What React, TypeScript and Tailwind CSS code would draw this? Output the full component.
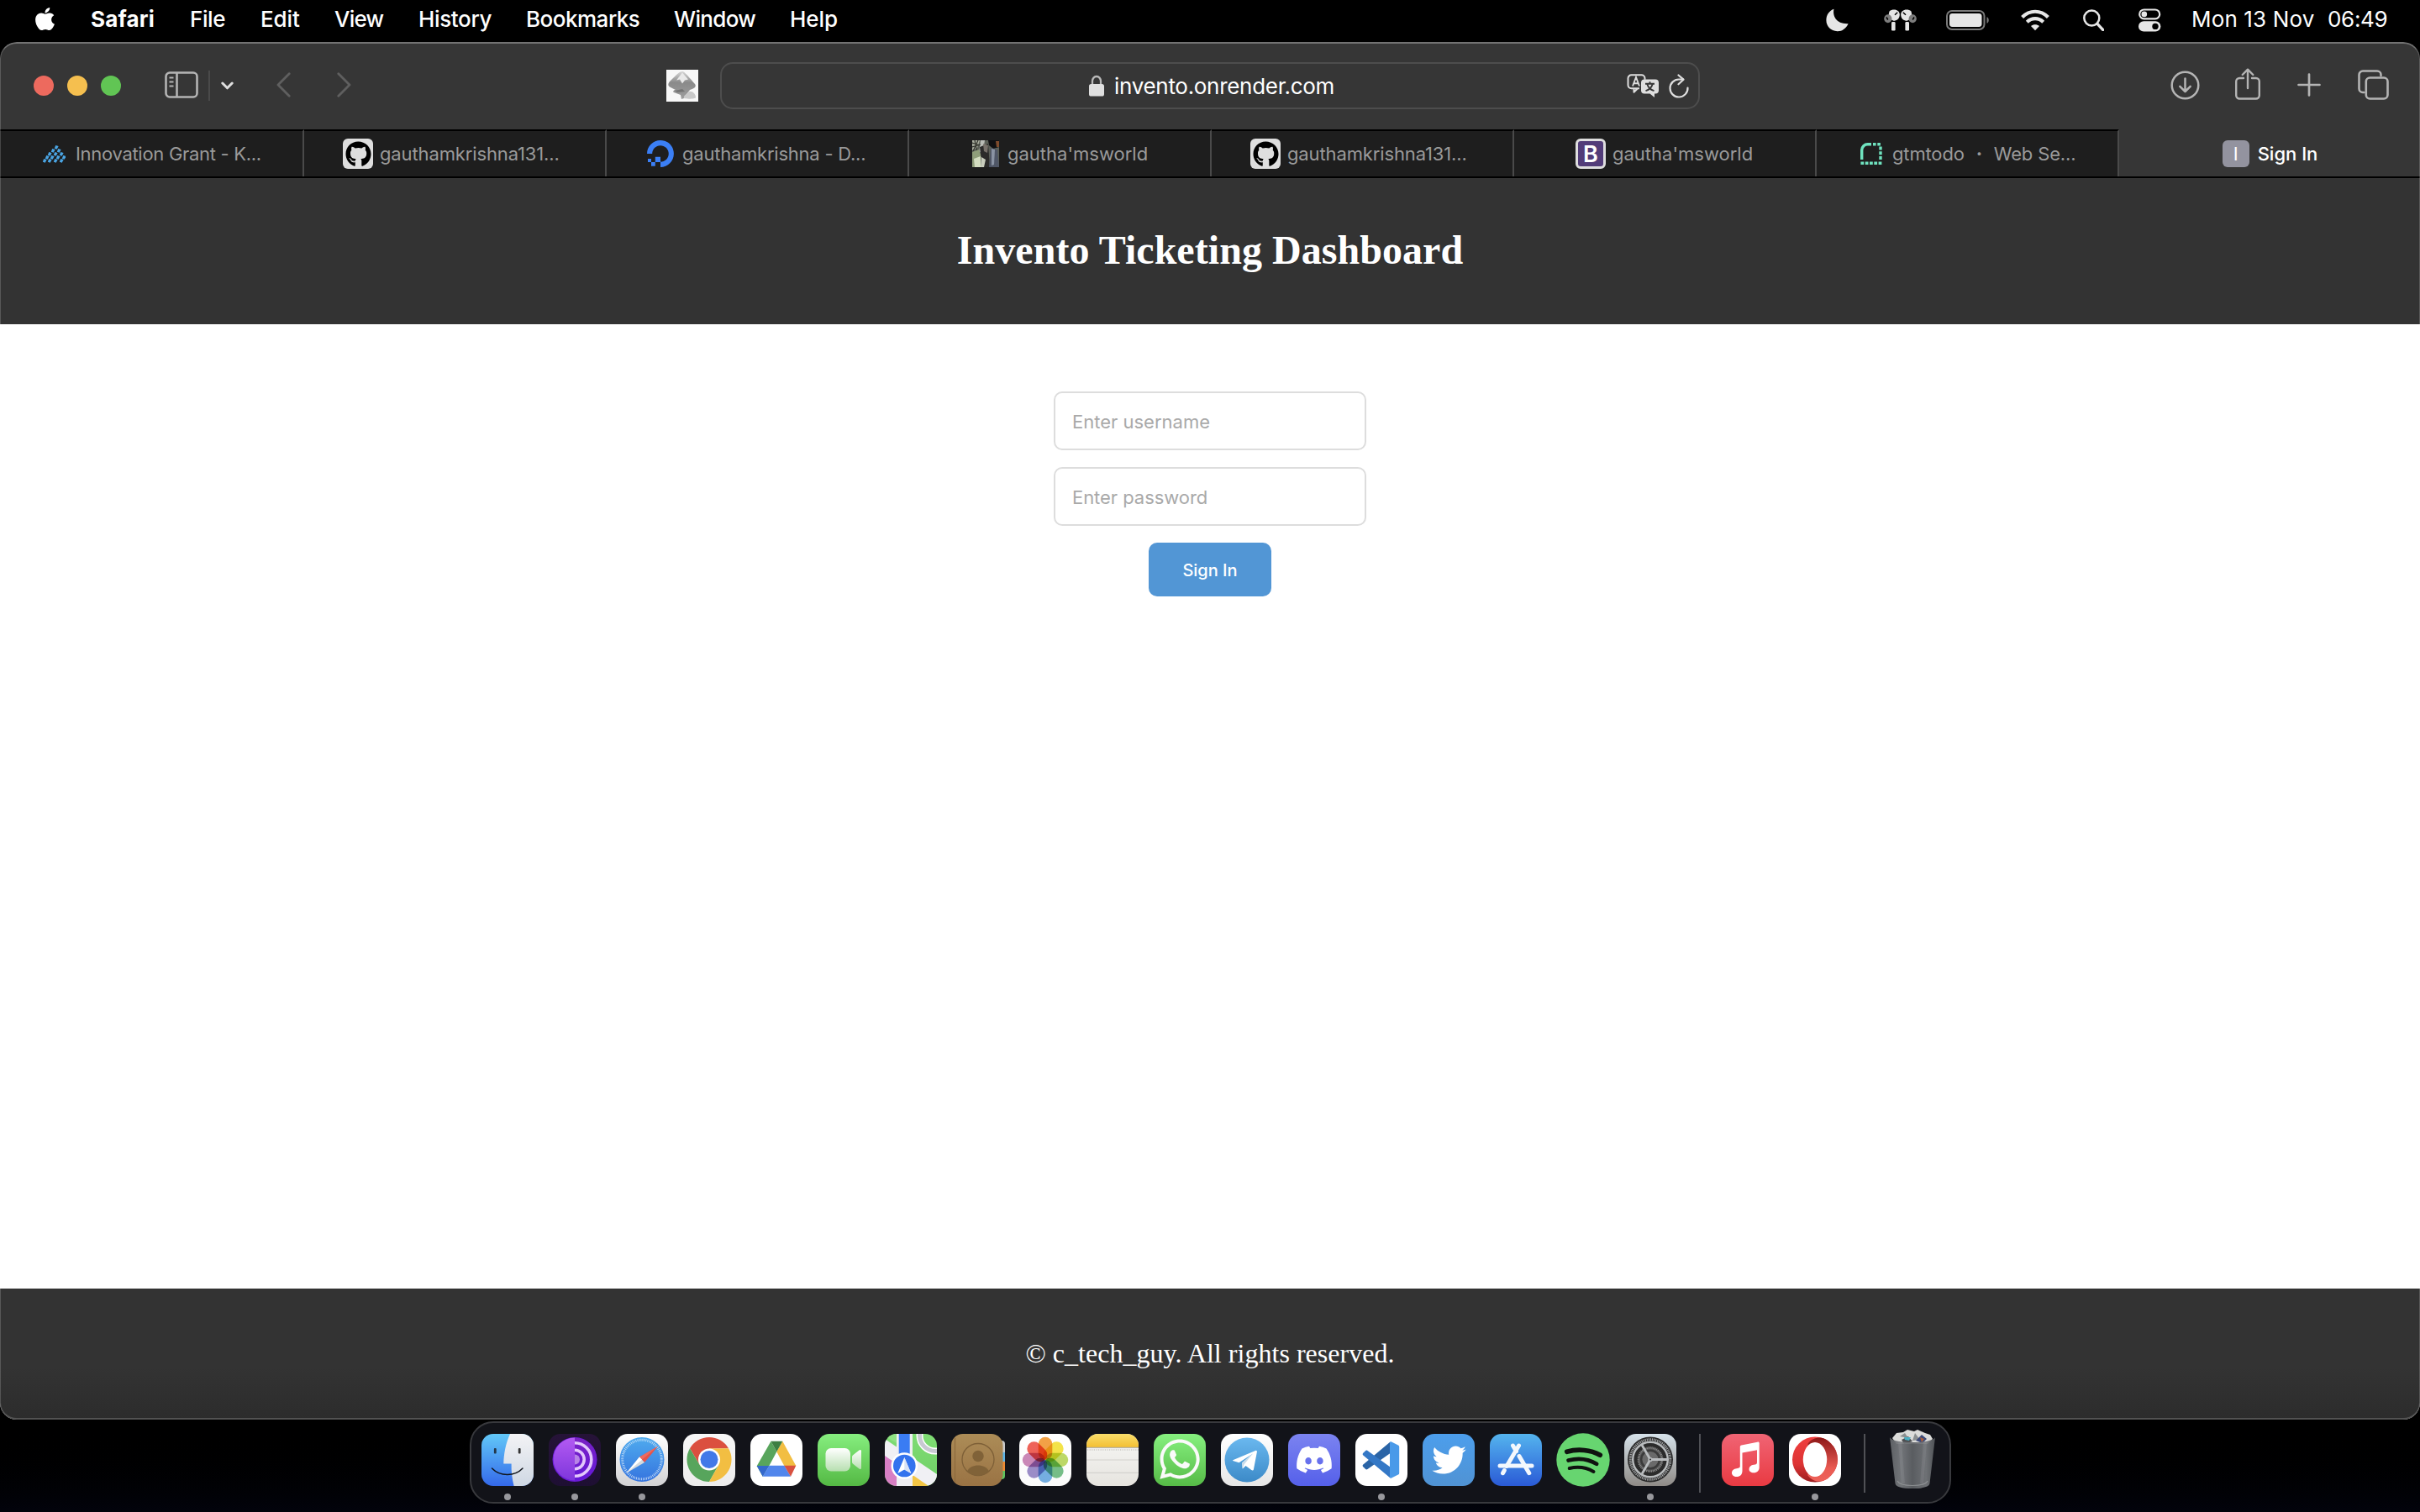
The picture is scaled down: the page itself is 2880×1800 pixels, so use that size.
import React from "react";
import { FaApple, FaDiscord, FaGithub, FaTwitter, FaWhatsapp } from "react-icons/fa";

/* ---------------------------------------------------------------- menu bar */

const menus = [
  { label: "Safari", cls: "w-[118px] font-bold tracking-[0.2px]" },
  { label: "File", cls: "w-[84px] font-medium tracking-[-0.4px]" },
  { label: "Edit", cls: "w-[88px] font-medium tracking-[-0.1px]" },
  { label: "View", cls: "w-[100px] font-medium tracking-[-0.8px]" },
  { label: "History", cls: "w-[128px] font-medium tracking-[-0.35px]" },
  { label: "Bookmarks", cls: "w-[176px] font-medium tracking-[-0.5px]" },
  { label: "Window", cls: "w-[138px] font-medium tracking-[-0.65px]" },
  { label: "Help", cls: "font-medium tracking-[-0.1px]" },
];

function MenuBar() {
  return (
    <header className="flex h-[50px] w-full shrink-0 items-center bg-black text-[26px] leading-none text-white">
      <FaApple className="mb-[5px] ml-[39px] mr-[40px] h-[31px] w-[29px] shrink-0" />
      <nav className="flex grow pb-[5px]">
        {menus.map((m) => (
          <span key={m.label} className={m.cls}>{m.label}</span>
        ))}
      </nav>
      <div className="flex shrink-0 items-center pb-[3px] text-[#e6e6e6]">
        <svg className="mr-[42px] h-[28px] w-[27px]" viewBox="0 0 27 28">
          <path d="M9.5 .8C7.6 9.6 12.8 18.9 26.6 18.2 24 24 19 27.4 13.6 27.2 5.800 27 .4 21.200 .4 14 .4 8 4 2.600 9.500 .8Z" fill="currentColor" />
        </svg>
        <svg className="mr-[35px] h-[26px] w-[39px]" viewBox="0 0 39 26">
          <g fill="currentColor">
            <path d="M12 .6c4 0 7 2.500 6.800 6.200-.2 4.600-3.400 7-7.300 7L8 12 5.600 6.500 6.500 2.600C8 1.200 10 .6 12 .6Z" />
            <path d="M27 .6c-4 0-7 2.500-6.800 6.200.2 4.600 3.400 7 7.300 7L31 12l2.400-5.500-.9-3.900C31 1.200 29 .6 27 .6Z" />
            <rect x="9" y="15" width="4.600" height="10.600" rx="1.300" />
            <rect x="25.400" y="15" width="4.600" height="10.600" rx="1.300" />
          </g>
          <g fill="#7d7d7d">
            <ellipse cx="4.800" cy="11.200" rx="4.600" ry="5" />
            <ellipse cx="34.200" cy="11.200" rx="4.600" ry="5" />
          </g>
          <path d="M13 6.800l3.200-3M26 6.800l-3.200-3M3 9.500l1.800 3M36 9.500l-1.800 3" stroke="#000" strokeWidth="1.500" />
        </svg>
        <svg className="mr-[37px] h-[24px] w-[52px]" viewBox="0 0 52 24">
          <rect x="1" y="1" width="44.500" height="22" rx="6" fill="none" stroke="#7a7a7a" strokeWidth="2" />
          <rect x="4" y="4" width="38.500" height="16" rx="3.400" fill="currentColor" />
          <path d="M48.500 8.200c3 1.200 3 6.400 0 7.600Z" fill="#7a7a7a" />
        </svg>
        <svg className="mr-[40px] h-[26px] w-[34px]" viewBox="0 0 34 26">
          <g fill="none" stroke="currentColor" strokeWidth="4.200">
            <path d="M1.600 9.400C10.500 .5 23.500 .5 32.400 9.400" />
            <path d="M7.300 15.200c5.600-5.400 13.800-5.400 19.400 0" />
          </g>
          <path d="M17 25.300l-5-5.200c2.800-2.600 7.200-2.600 10 0Z" fill="currentColor" />
        </svg>
        <svg className="mr-[41px] h-[26px] w-[25px]" viewBox="0 0 25 26">
          <circle cx="10.300" cy="10.500" r="9" fill="none" stroke="currentColor" strokeWidth="2.500" />
          <path d="M17 17.400l6.600 7" stroke="currentColor" strokeWidth="3.400" strokeLinecap="round" />
        </svg>
        <svg className="mr-[36px] h-[28px] w-[27px]" viewBox="0 0 27 28">
          <rect x="1.200" y="1.500" width="24" height="10.800" rx="5.400" fill="none" stroke="currentColor" strokeWidth="2.200" />
          <circle cx="6.800" cy="6.900" r="3.300" fill="currentColor" />
          <rect y="15.200" width="26.400" height="12.400" rx="6.200" fill="currentColor" />
          <circle cx="20" cy="21.400" r="3.700" fill="#000" />
        </svg>
      </div>
      <span className="w-[162px] shrink-0 pb-[5px] font-normal tracking-[0.15px]">Mon 13 Nov</span>
      <span className="w-[110px] shrink-0 pb-[5px] font-normal tracking-[-0.3px]">06:49</span>
    </header>
  );
}

/* ----------------------------------------------------------------- toolbar */

function Toolbar() {
  return (
    <div className="flex h-[104px] shrink-0 items-center bg-[#363636]">
      <div className="ml-[40px] flex gap-4">
        <i className="size-6 rounded-full bg-[#ed6a5e]" />
        <i className="size-6 rounded-full bg-[#f5bf4f]" />
        <i className="size-6 rounded-full bg-[#61c554]" />
      </div>
      <svg className="mb-[2px] ml-[52px] h-[32px] w-[40px] text-[#b4b4b4]" viewBox="0 0 40 32" fill="none" stroke="currentColor" strokeWidth="2.600">
        <rect x="1.500" y="1.500" width="37" height="29" rx="4.500" />
        <path d="M14.500 1.500v29" />
        <path d="M5.500 7.500h5M5.500 12.500h5M5.500 17.500h5" strokeWidth="2" />
      </svg>
      <i className="ml-[12px] h-[36px] w-[2px] bg-[#4a4a4a]" />
      <svg className="ml-[13px] h-[10px] w-[15px]" viewBox="0 0 15 10" fill="none" stroke="#dedede" strokeWidth="3" strokeLinecap="round" strokeLinejoin="round">
        <path d="M1.800 2l5.700 5.800L13.200 2" />
      </svg>
      <svg className="mb-[2px] ml-[51px] h-[30px] w-[17px]" viewBox="0 0 17 30" fill="none" stroke="#5f5f5f" strokeWidth="2.800" strokeLinecap="round" strokeLinejoin="round">
        <path d="M15.200 1.800L2 15l13.200 13.200" />
      </svg>
      <svg className="mb-[2px] ml-[55px] h-[30px] w-[17px]" viewBox="0 0 17 30" fill="none" stroke="#5f5f5f" strokeWidth="2.800" strokeLinecap="round" strokeLinejoin="round">
        <path d="M1.800 1.800L15 15 1.800 28.200" />
      </svg>
      <svg className="ml-[375px] h-[38px] w-[38px]" viewBox="0 0 38 38">
        <defs>
          <linearGradient id="ink" x1="0" y1="0" x2="0" y2="1">
            <stop offset="0" stopColor="#d8d8d8" /><stop offset=".4" stopColor="#8a8a8a" /><stop offset="1" stopColor="#9d9d9d" />
          </linearGradient>
        </defs>
        <rect width="38" height="38" fill="#f8f8f8" />
        <path d="M19 2c2 0 4 2 15 15 2 3 0 5-6 7l-3 4c-2 2-1 4-4 6l-3 1-1-5-8-3c-2-1 0-3 2-3l-6-3c-4-2-3-5 0-8C13 5 16 2 19 2Z" fill="url(#ink)" />
        <path d="M19 3.500l7 8-4 1-3 4-3-5-4 1Z" fill="#e9e9e9" />
        <path d="M10 25l9-2 3 3-9 1Z" fill="#666" opacity=".7" />
        <path d="M21 34c-1-4 4-5 6-8 4-1 8 3 8 7 0 2-12 2-14 1Z" fill="#c9c9c9" />
      </svg>
      <div className="ml-[26px] flex h-[56px] w-[1166px] shrink-0 items-center rounded-[15px] border-2 border-[#4d4d4d]">
        <svg className="ml-[437px] h-[26px] w-[18px]" viewBox="0 0 18 26">
          <path d="M4 13V7.500a5 5.500 0 0 1 10 0V13" fill="none" stroke="#b9b9b9" strokeWidth="2.300" />
          <rect y="11" width="18" height="14.600" rx="2.600" fill="#dfdfdf" />
        </svg>
        <span className="ml-[12px] pt-[2px] text-[26px] leading-none tracking-[-0.3px] text-white">invento.onrender.com</span>
        <svg className="ml-auto h-[29px] w-[39px]" viewBox="0 0 39 29">
          <path d="M8.500 17.300v4.500l4.500-4.500M15 17.300H5.500a4 4 0 0 1-4-4V5.300a4 4 0 0 1 4-4h12a4 4 0 0 1 4 4v1.500" fill="none" stroke="#dedede" strokeWidth="2" strokeLinejoin="round" />
          <path d="M7 14.500L11 4l4 10.500M8.300 11.200h5.400" fill="none" stroke="#dedede" strokeWidth="1.900" />
          <path d="M21 6.500h13a4 4 0 0 1 4 4v9a4 4 0 0 1-4 4h-1V28l-5.500-4.500H21a4 4 0 0 1-4-4v-9a4 4 0 0 1 4-4Z" fill="#dedede" />
          <path d="M22 11.800h11M27.500 9.300v2.500M24.300 12c1 4 3.500 6.700 8.200 8.200M30.700 12c-1 4-3.500 6.700-8.200 8.200" fill="none" stroke="#363636" strokeWidth="1.900" />
        </svg>
        <svg className="ml-[11px] mr-[11px] h-[29px] w-[24px]" viewBox="0 0 24 29" fill="none" stroke="#dedede" strokeWidth="2.200" strokeLinecap="round" strokeLinejoin="round">
          <path d="M22.500 16.500A10.500 10.500 0 1 1 12 6.500h5" />
          <path d="M11.500 1.500l6 5.200-6 5.600" />
        </svg>
      </div>
      <div className="ml-[560px] flex items-center text-[#b4b4b4]">
        <svg className="mb-[2px] h-[35px] w-[35px]" viewBox="0 0 35 35" fill="none" stroke="currentColor" strokeWidth="2.500" strokeLinecap="round" strokeLinejoin="round">
          <circle cx="17.500" cy="17.500" r="15.800" />
          <path d="M17.500 9.500v15M11.300 18.800l6.200 6.200 6.200-6.200" />
        </svg>
        <svg className="mb-[5px] ml-[42px] h-[38px] w-[30px]" viewBox="0 0 30 38" fill="none" stroke="currentColor" strokeWidth="2.400" strokeLinecap="round" strokeLinejoin="round">
          <path d="M10 12H5.200a4 4 0 0 0-4 4v16.500a4 4 0 0 0 4 4h19.600a4 4 0 0 0 4-4V16a4 4 0 0 0-4-4H20" />
          <path d="M15 24V2M8.700 8L15 1.700 21.300 8" />
        </svg>
        <svg className="mb-[3px] ml-[44px] h-[28px] w-[28px]" viewBox="0 0 28 28" fill="none" stroke="currentColor" strokeWidth="2.700" strokeLinecap="round">
          <path d="M14 1.500v25M1.500 14h25" />
        </svg>
        <svg className="mb-[3px] ml-[44px] h-[36px] w-[37px]" viewBox="0 0 37 36" fill="none" stroke="currentColor" strokeWidth="2.600" strokeLinecap="round" strokeLinejoin="round">
          <path d="M7.500 27H6a4.500 4.500 0 0 1-4.500-4.500V6A4.500 4.500 0 0 1 6 1.500h17A4.500 4.500 0 0 1 27.500 6v1" />
          <rect x="9.800" y="9.500" width="25.700" height="25" rx="4.500" />
        </svg>
      </div>
    </div>
  );
}

/* -------------------------------------------------------------------- tabs */

function GithubTile() {
  return (
    <span className="flex size-9 shrink-0 items-center justify-center rounded-[6px] bg-[#dedede]">
      <FaGithub className="size-[31px] text-black" />
    </span>
  );
}

const KsumIcon = (
  <svg className="h-[21px] w-[27px]" viewBox="0 0 27 21" fill="#4aa5e4">
    {[
      [14, 1], [10, 5], [17, 5], [6, 9], [13, 9], [20, 9], [3, 13], [9, 13], [16, 13], [23, 13], [0, 17], [6, 17], [13, 17], [20, 17],
    ].map(([x, y]) => (
      <path key={`${x}-${y}`} d={`M${x + 1.200} ${y - 1}l3.400 1-1.800 3.800-3-1Z`} />
    ))}
  </svg>
);

const OceanIcon = (
  <svg className="h-[32px] w-[32px]" viewBox="0 0 32 32" fill="#3b7ff5">
    <path d="M16 32v-6.200c6.600 0 11.600-6.500 9.100-13.400a9.300 9.300 0 0 0-5.500-5.500C12.700 4.400 6.200 9.400 6.200 16H0C0 5.600 10.100-2.600 21 .8c4.800 1.500 8.600 5.300 10.100 10.100C34.500 21.900 26.400 32 16 32Z" />
    <path d="M9.800 19.700H16V26H9.800zM5 26h4.800v4.800H5zM1 22h4v4H1z" />
  </svg>
);

const PhotoIcon = (
  <svg className="h-[32px] w-[32px]" viewBox="0 0 32 32">
    <rect width="32" height="32" fill="#5c6058" />
    <path d="M0 0h9l-3 9-6 3Z" fill="#a9ad9f" /><path d="M10 0h5l-2 12-5 3Z" fill="#b9bcb6" />
    <path d="M0 3l9 3M0 8l10-3M3 0l3 14M7 0L1 13" stroke="#34362f" strokeWidth="1.200" />
    <path d="M0 14l8-3 3 9-5 12H0Z" fill="#8f9e7a" /><path d="M2 22l8-3v13H3Z" fill="#d3ddc0" />
    <path d="M9 8l10-4 2 28h-9Z" fill="#2b2b2a" /><path d="M13 4l6 2-1 9-4-2Z" fill="#77716a" />
    <path d="M19 0h13v8l-7 2-5-4Z" fill="#101012" /><path d="M28 1h4v7h-3Z" fill="#7d4a2c" />
    <path d="M22 9l8 2 2 21H20Z" fill="#4f5666" /><path d="M23 10l4 1-1 18-3 1Z" fill="#8a93a3" />
    <path d="M11 20l5 3-2 9h-4Z" fill="#c8cdbd" />
  </svg>
);

const BootstrapIcon = (
  <span className="flex h-9 w-9 shrink-0 items-center justify-center rounded-[6px] border-[3px] border-[#dedede] bg-[#523c79] text-[27px] font-semibold leading-none text-white">B</span>
);

const RenderIcon = (
  <svg className="h-[26px] w-[26px]" viewBox="0 0 26 26" fill="none" stroke="#6fe3bf" strokeWidth="3.400">
    <path d="M1.700 20V8.500a7 7 0 0 1 7-6.800H13" />
    <path d="M15 1.700h10.500" strokeDasharray="3.600 1.700" />
    <path d="M24 4.500V21" strokeDasharray="4 1.800" />
    <path d="M.4 24.300h25.200" strokeDasharray="3.800 1.500" />
  </svg>
);

const SignInIcon = (
  <span className="flex size-8 shrink-0 items-center justify-center rounded-[6px] bg-[#93939f] text-[22px] font-normal leading-none text-white">I</span>
);

type Tab = { icon: React.ReactNode; text: React.ReactNode; cls: string };

const tabs: Tab[] = [
  { icon: KsumIcon, text: "Innovation Grant - K...", cls: "pl-[51px] gap-[12px] tracking-[-0.3px]" },
  { icon: <GithubTile />, text: "gauthamkrishna131...", cls: "pl-[46px] gap-[8px] tracking-[-0.13px]" },
  { icon: OceanIcon, text: "gauthamkrishna - D...", cls: "pl-[48px] gap-[10px] tracking-[-0.23px]" },
  { icon: PhotoIcon, text: "gautha'msworld", cls: "pl-[75px] gap-[10px] tracking-[0px]" },
  { icon: <GithubTile />, text: "gauthamkrishna131...", cls: "pl-[46px] gap-[8px] tracking-[-0.13px]" },
  { icon: BootstrapIcon, text: "gautha'msworld", cls: "pl-[73px] gap-[8px] tracking-[0px]" },
  {
    icon: RenderIcon,
    text: (<><span>gtmtodo</span><span className="w-[35px] text-center font-bold">·</span><span>Web Se...</span></>),
    cls: "pl-[52px] gap-[12px] tracking-[-0.15px]",
  },
];

function TabBar() {
  return (
    <div className="flex h-[58px] shrink-0 border-b-2 border-black bg-[#363636] text-[22px] leading-none text-[#9a9a9a]">
      {tabs.map((t, i) => (
        <div key={i} className={`flex w-[360px] shrink-0 items-center border-r-2 border-t-2 border-r-[#4a4a4a] border-t-black bg-[#1e1e1e] first:w-[362px] ${t.cls}`}>
          {t.icon}
          <span className="flex whitespace-pre">{t.text}</span>
        </div>
      ))}
      <div className="flex grow items-center justify-center gap-[10px] pl-px pt-[2px] font-medium text-white">
        {SignInIcon}
        <span>Sign In</span>
      </div>
    </div>
  );
}

/* -------------------------------------------------------------------- page */

function Page() {
  return (
    <div className="flex grow flex-col bg-white">
      <div className="flex h-[174px] shrink-0 items-center justify-center bg-[#333333] pb-[2px]">
        <h1 className="font-['Liberation_Serif',serif] text-[48px] font-bold leading-none tracking-[0.05px] text-white">Invento Ticketing Dashboard</h1>
      </div>
      <form className="flex grow flex-col items-center pt-[80px]">
        <input placeholder="Enter username" className="h-[70px] w-[372px] rounded-[10px] border-2 border-[#dddddd] px-[20px] pt-[2px] text-[22px] placeholder:text-[#a9a9a9]" />
        <input placeholder="Enter password" className="mt-[20px] h-[70px] w-[372px] rounded-[10px] border-2 border-[#dddddd] px-[20px] pt-[2px] text-[22px] tracking-[-0.05px] placeholder:text-[#a9a9a9]" />
        <button type="button" className="mt-[20px] h-[64px] w-[146px] rounded-[10px] bg-[#5296d5] pt-px text-[20px] font-medium leading-none text-white">Sign In</button>
      </form>
      <footer className="flex h-[156px] shrink-0 items-center justify-center bg-linear-to-b from-[#333333] from-60% to-[#2c2c2c] pb-[2px]">
        <p className="font-['Liberation_Serif',serif] text-[32px] leading-none tracking-[0.03px] text-white">© c_tech_guy. All rights reserved.</p>
      </footer>
    </div>
  );
}

/* -------------------------------------------------------------------- dock */

function Tile({ id, from, to, children }: { id: string; from: string; to: string; children?: React.ReactNode }) {
  return (
    <svg className="size-[62px]" viewBox="0 0 62 62">
      <defs>
        <linearGradient id={`${id}-bg`} x1="0" y1="0" x2="0" y2="1">
          <stop offset="0" stopColor={from} /><stop offset="1" stopColor={to} />
        </linearGradient>
        <clipPath id={`${id}-clip`}><rect width="62" height="62" rx="14" /></clipPath>
      </defs>
      <g clipPath={`url(#${id}-clip)`}>
        <rect width="62" height="62" fill={`url(#${id}-bg)`} />
        {children}
      </g>
    </svg>
  );
}

const Finder = (
  <Tile id="finder" from="#62c8f8" to="#3469ea">
    <defs><linearGradient id="finder-r" x1="0" y1="0" x2="0" y2="1"><stop offset="0" stopColor="#f3f3f5" /><stop offset="1" stopColor="#cfd8e4" /></linearGradient></defs>
    <path d="M34 0C29 11 26.500 23 26.300 35.500h9.300c-.2 9 .8 18 3 26.500H62V0Z" fill="url(#finder-r)" />
    <rect x="14.900" y="17" width="2.800" height="6.400" rx="1" fill="#23374a" />
    <rect x="43.800" y="17" width="2.800" height="6.400" rx="1" fill="#333" />
    <path d="M12.500 41c9.500 10 27 10 36.500 0" fill="none" stroke="#10151c" strokeWidth="1.500" strokeLinecap="round" />
  </Tile>
);

const Tor = (
  <Tile id="tor" from="#261338" to="#1e0f33">
    <defs>
      <linearGradient id="tor-l" x1="0" y1="0" x2="0" y2="1"><stop offset="0" stopColor="#b35af2" /><stop offset="1" stopColor="#7e36dc" /></linearGradient>
      <linearGradient id="tor-r" x1="0" y1="0" x2="0" y2="1"><stop offset="0" stopColor="#7a22c4" /><stop offset="1" stopColor="#6417d8" /></linearGradient>
    </defs>
    <circle cx="31" cy="30.500" r="26.500" fill="#6a1bd6" />
    <path d="M31 4.500a25.500 25.500 0 0 0 0 51Z" fill="url(#tor-l)" />
    <path d="M31 4.500a25.500 25.500 0 0 1 0 51Z" fill="url(#tor-r)" />
    <path d="M31 10.700a19.800 19.800 0 0 1 0 39.600M31 19.300a11.200 11.200 0 0 1 0 22.400" fill="none" stroke="#e3c8fb" strokeWidth="3.600" />
    <path d="M31 24.500a6 6 0 0 1 0 12Z" fill="#b884e6" />
  </Tile>
);

const Safari = (
  <Tile id="safari" from="#ffffff" to="#d2d2d4">
    <defs><linearGradient id="safari-c" x1="0" y1="0" x2="0" y2="1"><stop offset="0" stopColor="#4fabee" /><stop offset="1" stopColor="#3574df" /></linearGradient></defs>
    <circle cx="31" cy="30.500" r="26.500" fill="url(#safari-c)" />
    <circle cx="31" cy="30.500" r="23.300" fill="none" stroke="#e8f3fc" strokeOpacity=".85" strokeWidth="3" strokeDasharray=".8 1.230" />
    <path d="M50 14.800L34 34l-6-6.500Z" fill="#e5534a" /><path d="M28 27.500L50 14.800 31 30.700Z" fill="#ee6a60" />
    <path d="M12.300 46.700L28 27.500l6 6.500Z" fill="#d5dade" /><path d="M12.300 46.700L28 27.500l3 3.200Z" fill="#fff" />
  </Tile>
);

const Chrome = (
  <Tile id="chrome" from="#f7f7f7" to="#ececec">
    <path d="M8 17.250A26.500 26.500 0 0 1 54 17.250L31 17.500 19.700 37Z" fill="#db4f3f" />
    <path d="M8 17.250L19.700 37 31 32l11.300 5L31 57A26.500 26.500 0 0 1 8 17.250Z" fill="#57a55c" />
    <path d="M54 17.250A26.500 26.500 0 0 1 31 57L42.300 37 31 17.500Z" fill="#f2be42" />
    <circle cx="31" cy="30.500" r="13" fill="#fff" />
    <circle cx="31" cy="30.500" r="10.500" fill="#4279e8" />
  </Tile>
);

const Drive = (
  <Tile id="drive" from="#ffffff" to="#ffffff">
    <path d="M24.500 8.700L31.300 21.300 22.500 37.800 14.700 50.700 7.700 38.300Z" fill="#58a55c" />
    <path d="M38.300 8.700L54.300 38 40.300 38 31.300 21.300Z" fill="#f2be42" />
    <path d="M24.500 8.700h13.800l-7 12.600Z" fill="#3d7f42" />
    <path d="M7.700 38h14.600l-7.600 12.700Z" fill="#3468cc" />
    <path d="M22.500 37.700h18l7.500 13H14.700Z" fill="#5186ec" />
    <path d="M40.300 37.700h14L48 50.700Z" fill="#d85140" />
  </Tile>
);

const FaceTime = (
  <Tile id="facetime" from="#86ee7f" to="#54b944">
    <defs><linearGradient id="ft" x1="0" y1="0" x2="0" y2="1"><stop offset="0" stopColor="#fff" /><stop offset="1" stopColor="#b7dfb0" /></linearGradient></defs>
    <rect x="9.500" y="17" width="29.500" height="27.500" rx="6.500" fill="url(#ft)" />
    <path d="M41 27.500c0-1 .5-1.800 1.500-2.500l7-5.500c1.300-1 2.500-.5 2.500 1v20c0 1.500-1.200 2-2.500 1l-7-5.500c-1-.7-1.500-1.500-1.500-2.500Z" fill="url(#ft)" />
  </Tile>
);

const Maps = (
  <Tile id="maps" from="#7fdc74" to="#6fcf66">
    <path d="M0 22l15 10v30H0Z" fill="#d77fc4" />
    <path d="M30 44l22 18H30Z" fill="#f3c544" />
    <path d="M0 6l62 42v14H52L0 26Z" fill="#f0f0f4" />
    <path d="M0 0h16v12L0 3Z" fill="#8fe283" />
    <rect x="14" width="19" height="62" fill="#eeeef2" />
    <rect x="16.700" width="13" height="30" fill="#3a7cf3" />
    <circle cx="60" cy="2" r="18.500" fill="none" stroke="#fff" strokeWidth="8" />
    <circle cx="60" cy="2" r="18.500" fill="none" stroke="#c8c9d2" strokeWidth="5" />
    <circle cx="23.300" cy="38" r="15.800" fill="#fff" />
    <circle cx="23.300" cy="38" r="13.300" fill="#3373ee" />
    <path d="M23.300 28l8 19-8-4.500-8 4.500Z" fill="#fff" />
    <path d="M23.300 28l8 19-8-4.500Z" fill="#d8e2f5" />
  </Tile>
);

const Contacts = (
  <svg className="size-[64px]" viewBox="0 0 64 64">
    <defs><linearGradient id="ct" x1="0" y1="0" x2="0" y2="1"><stop offset="0" stopColor="#ac8c57" /><stop offset="1" stopColor="#9a7344" /></linearGradient></defs>
    <g transform="translate(0 1)">
      <path d="M54 8h6a4 4 0 0 1 4 4v10H54Z" fill="#c9c9c9" /><path d="M54 22h10v11H54Z" fill="#5db5e8" />
      <path d="M54 33h10v11H54Z" fill="#ef8b33" /><path d="M54 44h10v6a4 4 0 0 1-4 4h-6Z" fill="#5fc55f" />
      <rect width="61.500" height="62" rx="14" fill="url(#ct)" />
      <path d="M4.500 5v52" stroke="#8c6a3d" strokeWidth="1.200" />
      <circle cx="32" cy="30.500" r="19" fill="none" stroke="#7d5f37" strokeWidth="1.300" />
      <circle cx="32" cy="26.500" r="6.700" fill="#806238" />
      <path d="M19 44.500c4-9.500 22-9.500 26 0a19 19 0 0 1-26 0Z" fill="#806238" />
    </g>
  </svg>
);

const petals = ["#f29b38", "#f3e23b", "#b9d75c", "#6dbb80", "#6caae2", "#9686c6", "#c880b4", "#ee574c"];
const Photos = (
  <Tile id="photos" from="#ffffff" to="#fbfbfb">
    {petals.map((c, i) => (
      <rect key={c} x="22.700" y="3.800" width="16.600" height="27" rx="8.300" fill={c} fillOpacity=".93" className="mix-blend-multiply" transform={`rotate(${i * 45} 31 31)`} />
    ))}
  </Tile>
);

const Notes = (
  <Tile id="notes" from="#f7f7f5" to="#e6e4df">
    <defs><linearGradient id="nt" x1="0" y1="0" x2="0" y2="1"><stop offset="0" stopColor="#fade6b" /><stop offset="1" stopColor="#f3bf33" /></linearGradient></defs>
    <rect width="62" height="16" fill="url(#nt)" />
    <path d="M0 16.300h62" stroke="#a8a59a" strokeWidth="1" />
    <path d="M1 19h61" stroke="#b7b5b0" strokeWidth="1.200" strokeDasharray="1.200 1.400" />
    <path d="M0 31h62M0 46.300h62" stroke="#d3d2ce" strokeWidth="1.200" />
  </Tile>
);

const WhatsApp = (
  <Tile id="wa" from="#86f07f" to="#56bb47">
    <FaWhatsapp x="4" y="3.200" size={54} color="#fafafa" />
  </Tile>
);

const Telegram = (
  <Tile id="tg" from="#ffffff" to="#e6e6e6">
    <defs><linearGradient id="tgc" x1="0" y1="0" x2="0" y2="1"><stop offset="0" stopColor="#6ab8ef" /><stop offset="1" stopColor="#3c8ac8" /></linearGradient></defs>
    <circle cx="31" cy="31" r="26.500" fill="url(#tgc)" />
    <path d="M14.200 31.300L41 19.900c1.300-.5 2.200.2 1.900 1.700L39 41.900c-.3 1.500-1.500 2-2.700 1.200L29.500 38l-3.700 3.500-.8-7L38 23.500 21.500 34.200l-7.300-2.300Z" fill="#fff" />
    <path d="M25 34.500L38 23.500 27.500 36.500l-1.700 5Z" fill="#c9dcea" />
  </Tile>
);

const Discord = (
  <Tile id="dc" from="#7b83f0" to="#5560ea">
    <FaDiscord x="8.300" y="8.000" size={45.400} color="#fff" />
  </Tile>
);

const VSCode = (
  <Tile id="vs" from="#ffffff" to="#ffffff">
    <path d="M41.500 9.500V23L14.500 42c-1 .7-1.800.6-2.600-.2l-2.600-2.600c-.9-.9-.8-2 0-2.700Z" fill="#2a64a6" />
    <path d="M9.300 25.500c-.8-.7-.9-1.800 0-2.700l2.600-2.600c.8-.8 1.600-.9 2.600-.2l27 19.500v13Z" fill="#3478c6" />
    <path d="M41 10c.4-.8 1.200-.9 2-.5l8 3.900c.8.4 1.200 1 1.200 1.900v31.400c0 .9-.4 1.500-1.200 1.900l-8 3.900c-.8.400-1.600.3-2-.5Z" fill="#4a9ae9" />
  </Tile>
);

const Twitter = (
  <Tile id="tw" from="#4c9eec" to="#5093d4">
    <FaTwitter x="11.300" y="10.800" size={40.500} color="#fff" />
  </Tile>
);

const AppStore = (
  <Tile id="as" from="#54b4ee" to="#2a5ad6">
    <g fill="none" stroke="#f4f8fd" strokeWidth="5" strokeLinecap="round">
      <path d="M34.500 14L20 38.500M17.300 43.500l-1.800 3.200M27.500 14l4 6.800M35 26.500l11.800 20.200" />
      <path d="M12 38h38" />
    </g>
  </Tile>
);

const Spotify = (
  <svg className="size-[64px]" viewBox="-1 -1 64 64">
    <circle cx="31" cy="31" r="31.700" fill="#67d570" />
    <g fill="none" stroke="#0f1310" strokeLinecap="round">
      <path d="M11.700 21.300C25 17.300 40 19 51.300 25.200" strokeWidth="5.600" />
      <path d="M13.600 31.500c11.500-3 23.500-1.700 33.500 4.300" strokeWidth="4.800" />
      <path d="M14.700 41c10-2.300 20-1.200 28.800 4" strokeWidth="4" />
    </g>
  </svg>
);

const Settings = (
  <Tile id="st" from="#d6e2ea" to="#8f8b87">
    <circle cx="31" cy="30.500" r="27" fill="#2b2b2b" />
    <circle cx="31" cy="30.500" r="23.800" fill="none" stroke="#a9abad" strokeWidth="3" strokeDasharray="1.100 1" />
    <circle cx="31" cy="30.500" r="20.800" fill="none" stroke="#b9bcbe" strokeWidth="2.400" />
    <circle cx="31" cy="30.500" r="14.200" fill="#565656" stroke="#8b8b8b" strokeWidth="2.400" strokeDasharray="1.100 .9" />
    <circle cx="31" cy="30.500" r="10.800" fill="#6a6a6a" stroke="#3a3a3a" strokeWidth="2.400" />
    <path d="M31 30.500h20M31 30.500L21 13.200M31 30.500L21 47.800" stroke="#b9bcbe" strokeWidth="2.800" />
    <circle cx="31" cy="30.500" r="2.600" fill="#b9bcbe" /><circle cx="31" cy="30.500" r="1" fill="#333" />
  </Tile>
);

const Music = (
  <Tile id="mu" from="#f06474" to="#e93a42">
    <path d="M21.800 15.500c0-1.100.6-1.800 1.700-2l19-3.800c1.400-.3 2.200.3 2.200 1.600v28.500c0 4-2.500 6.500-6.700 6.500-3.300 0-5.500-1.700-5.500-4.300 0-3 2.300-4.700 5.500-5.200 3.200-.5 4-1 4-2.800V19.200L24.500 22.600V44c0 4.500-2.700 7-6.700 7-3.500 0-5.800-1.800-5.800-4.500 0-3 2.400-4.700 5.600-5.200 3.300-.5 4.200-1.100 4.200-3Z" fill="#fff" />
  </Tile>
);

const Opera = (
  <Tile id="op" from="#ffffff" to="#ffffff">
    <defs>
      <linearGradient id="op-l" x1="0" y1="0" x2="0" y2="1"><stop offset="0" stopColor="#f03f3f" /><stop offset=".6" stopColor="#dd3434" /><stop offset="1" stopColor="#9c1d20" /></linearGradient>
      <linearGradient id="op-r" x1="0" y1="0" x2="0" y2="1"><stop offset="0" stopColor="#8d1818" /><stop offset=".7" stopColor="#ea5b53" /><stop offset="1" stopColor="#ee625a" /></linearGradient>
    </defs>
    <circle cx="31" cy="30.500" r="27" fill="url(#op-l)" />
    <path d="M22.500 11.500C31 0.500 44 4 49 10.500a27 27 0 0 1 0 40C44 57 31 60.500 22.500 49.500Z" fill="url(#op-r)" />
    <ellipse cx="31" cy="30.500" rx="14.200" ry="20.500" fill="#fff" />
  </Tile>
);

const Trash = (
  <svg className="h-[70px] w-[54px]" viewBox="0 0 54 70">
    <defs>
      <linearGradient id="tr" x1="0" y1="0" x2="1" y2="0">
        <stop offset="0" stopColor="#63666a" /><stop offset=".25" stopColor="#797c80" /><stop offset=".5" stopColor="#5f6266" /><stop offset=".8" stopColor="#75787c" /><stop offset="1" stopColor="#55585c" />
      </linearGradient>
    </defs>
    <path d="M3 10l5-6 8-1 5-3 8 2 4-2 9 4 6 2 3 5-6 6H8Z" fill="#dcdcda" />
    <path d="M12 8l6-4 4 6ZM30 4l6 8-9 1Z" fill="#8b8f90" />
    <path d="M14 12l8-4 5 6-10 3Z" fill="#4d4f52" /><path d="M17 9l8 0-2 4-5-1Z" fill="#4cb0c4" />
    <path d="M31 13l7-7 6 5-5 5Z" fill="#3d4a78" /><path d="M36 9l5 2-3 4Z" fill="#a95d3a" />
    <path d="M0 9c1 3 10 6 27 6S53 12 54 9l-6.500 55c-.5 4-8 6-20.500 6S7 68 6.500 64Z" fill="url(#tr)" fillOpacity=".93" />
    <path d="M12 15l4 49M42 15l-4 49" stroke="#a6a9ab" strokeOpacity=".18" strokeWidth="4" />
    <path d="M9 61c2 4 10 5.500 18 5.500S43 65 45 61" fill="none" stroke="#a8abad" strokeOpacity=".6" strokeWidth="1.200" />
  </svg>
);

const apps: { name: string; icon: React.ReactNode; open?: boolean }[] = [
  { name: "Finder", icon: Finder, open: true },
  { name: "Tor Browser", icon: Tor, open: true },
  { name: "Safari", icon: Safari, open: true },
  { name: "Chrome", icon: Chrome },
  { name: "Drive", icon: Drive },
  { name: "FaceTime", icon: FaceTime },
  { name: "Maps", icon: Maps },
  { name: "Contacts", icon: Contacts },
  { name: "Photos", icon: Photos },
  { name: "Notes", icon: Notes },
  { name: "WhatsApp", icon: WhatsApp },
  { name: "Telegram", icon: Telegram },
  { name: "Discord", icon: Discord },
  { name: "VS Code", icon: VSCode, open: true },
  { name: "Twitter", icon: Twitter },
  { name: "App Store", icon: AppStore },
  { name: "Spotify", icon: Spotify },
  { name: "Settings", icon: Settings, open: true },
];

function DockItem({ icon, open }: { icon: React.ReactNode; open?: boolean }) {
  return (
    <div className="flex w-[80px] shrink-0 flex-col items-center">
      <div className="flex h-[62px] items-center justify-center">{icon}</div>
      {open && <i className="mt-[9px] size-2 rounded-full bg-[#98989d]" />}
    </div>
  );
}

function Dock() {
  return (
    <div className="flex h-[98px] w-[1763px] shrink-0 rounded-[28px] border-2 border-[#38393d] bg-[#121319] pl-[3px] pt-[13px]">
      {apps.map((a) => (
        <DockItem key={a.name} icon={a.icon} open={a.open} />
      ))}
      <i className="ml-[18px] h-[70px] w-[2px] bg-[#505156]" />
      <div className="ml-[16px] flex">
        <DockItem icon={Music} />
        <DockItem icon={Opera} open />
      </div>
      <i className="ml-[18px] h-[70px] w-[2px] bg-[#505156]" />
      <div className="-mt-[5px] ml-[29px]">{Trash}</div>
    </div>
  );
}

/* --------------------------------------------------------------------- app */

export default function App() {
  return (
    <div className="flex h-[1800px] w-[2880px] flex-col items-center overflow-hidden bg-black font-['Inter',sans-serif]">
      <MenuBar />
      <div className="relative flex h-[1640px] w-full shrink-0 flex-col overflow-hidden rounded-[20px]">
        <Toolbar />
        <TabBar />
        <Page />
        <div className="pointer-events-none absolute inset-0 rounded-[20px] border border-b-2 border-t-2 border-white/18 border-t-white/30" />
      </div>
      <div className="flex w-full grow justify-center bg-linear-to-b from-black to-[#02030c] pt-[2px]">
        <Dock />
      </div>
    </div>
  );
}
